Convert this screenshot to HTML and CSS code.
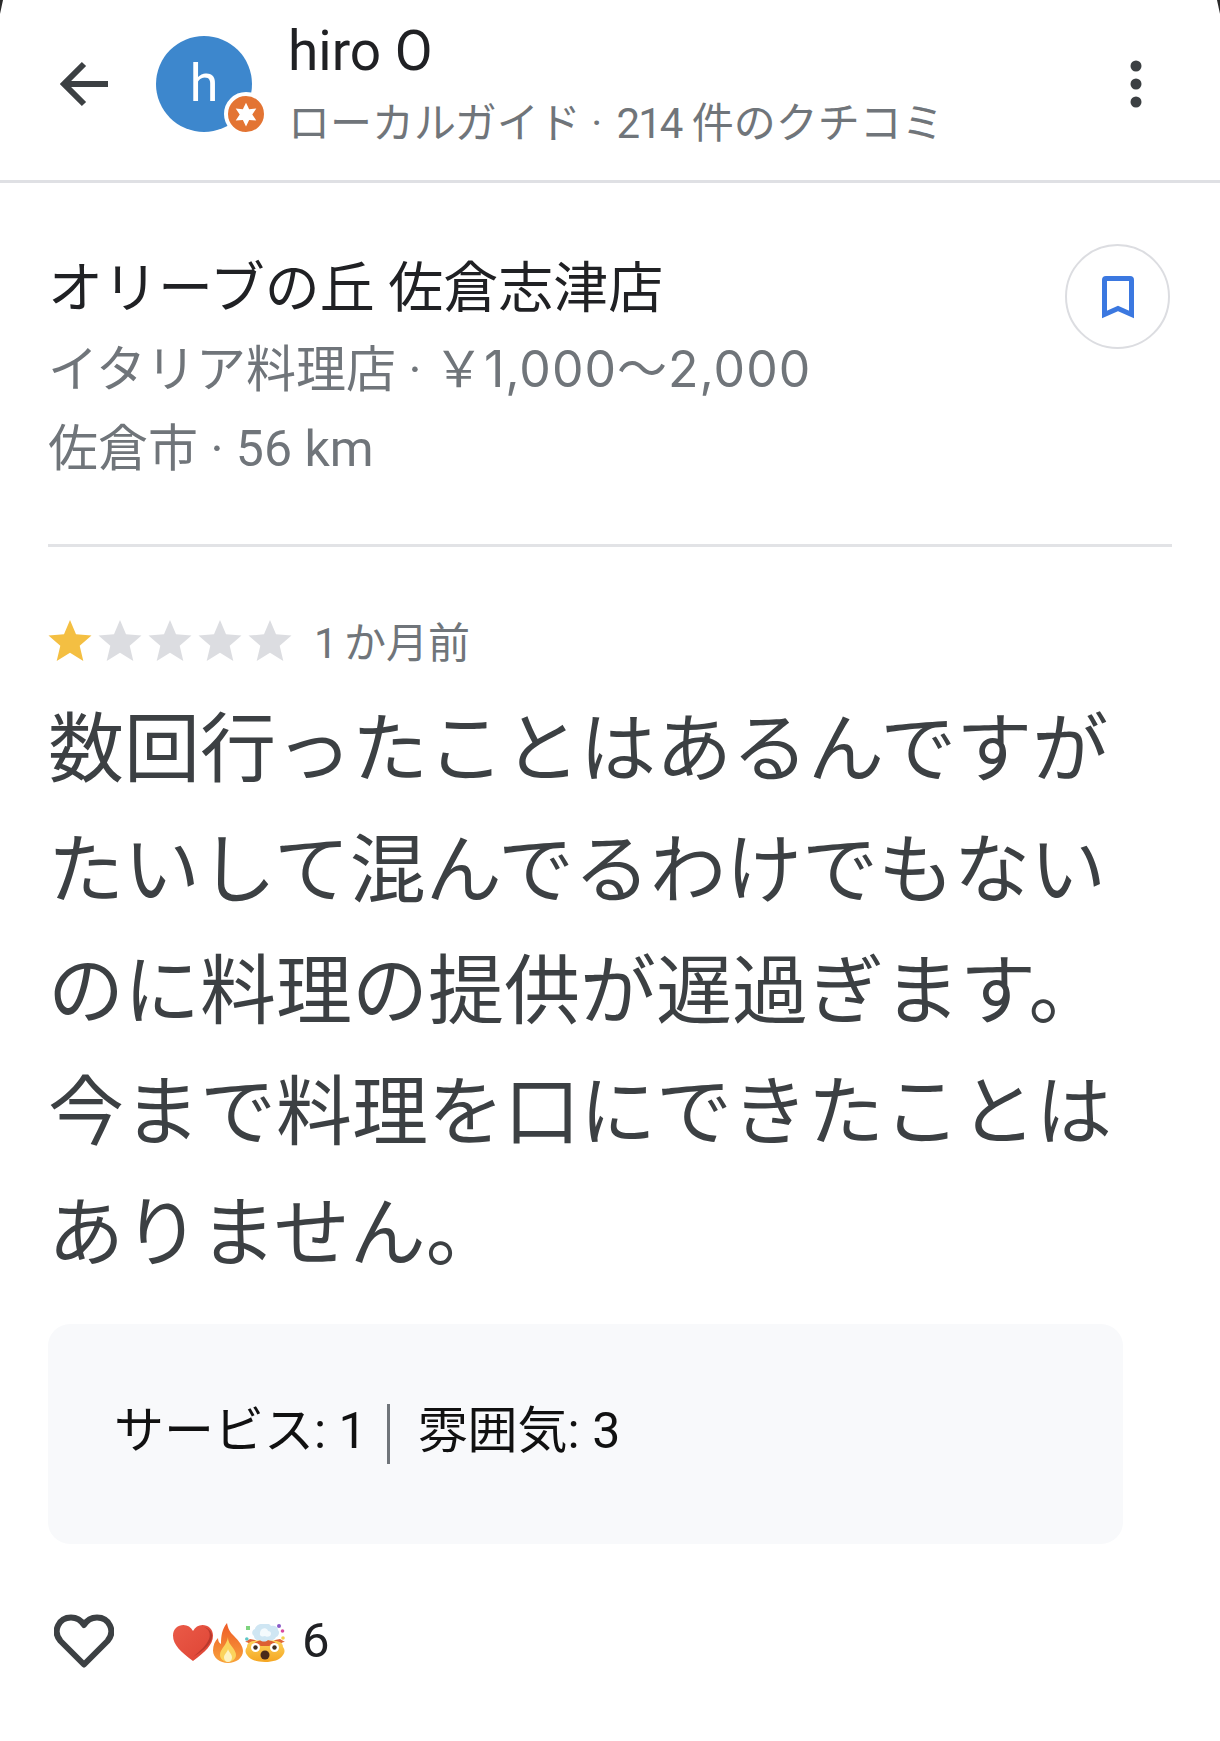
FILE: index.html
```html
<!DOCTYPE html>
<html lang="ja">
<head>
<meta charset="utf-8">
<title>hiro O のクチコミ</title>
<link rel="stylesheet" href="styles.css">
</head>
<body>
<div class="page">
  <span class="corner corner-left"></span>
  <span class="corner corner-right"></span>
  <header class="topbar">
    <svg class="back" viewBox="0 0 52 48"><path d="M50 24H6M26 4 6 24l20 20" fill="none" stroke="#3c4043" stroke-width="6"/></svg>
    <div class="avatar">h
      <span class="badge"><svg viewBox="0 0 24 24"><path d="M12 1.500l2.900 6 6.600-.5-3.700 5.500 3.700 5.500-6.600-.5-2.900 6-2.900-6-6.600.5 3.700-5.500L2.500 7l6.600.5z" fill="#fff"/></svg></span>
    </div>
    <div class="who">
      <div class="name">hiro O</div>
      <div class="sub">ローカルガイド · <span class="sub-count">214</span> 件のクチコミ</div>
    </div>
    <svg class="more" viewBox="0 0 12 48"><circle cx="6" cy="6" r="5.500" fill="#3c4043"/><circle cx="6" cy="24" r="5.500" fill="#3c4043"/><circle cx="6" cy="42" r="5.500" fill="#3c4043"/></svg>
  </header>

  <section class="place">
    <div class="place-info">
      <h1 class="place-name">オリーブの丘 佐倉志津店</h1>
      <div class="place-meta">イタリア料理店 · ￥<span class="price">1,000〜2,000</span></div>
      <div class="place-meta">佐倉市 · 56 km</div>
    </div>
    <div class="save"><svg viewBox="0 0 36 44"><path d="M4.500 39.500V5a1.500 1.500 0 0 1 1.500-1.500h24A1.500 1.500 0 0 1 31.500 5v34.500L18 33.500z" fill="none" stroke="#3b78e0" stroke-width="5"/></svg></div>
  </section>

  <section class="review">
    <div class="rating">
      <div class="stars">
        <svg class="star" viewBox="0 0 44 44"><path class="on" d="M22 1l6 14.300 15.500 1.300-11.800 10.200 3.600 15.200L22 33.800 8.700 42l3.600-15.200L.5 16.600 16 15.300z"/></svg>
        <svg class="star" viewBox="0 0 44 44"><path class="off" d="M22 1l6 14.300 15.500 1.300-11.800 10.200 3.600 15.200L22 33.800 8.700 42l3.600-15.200L.5 16.600 16 15.300z"/></svg>
        <svg class="star" viewBox="0 0 44 44"><path class="off" d="M22 1l6 14.300 15.500 1.300-11.800 10.200 3.600 15.200L22 33.800 8.700 42l3.600-15.200L.5 16.600 16 15.300z"/></svg>
        <svg class="star" viewBox="0 0 44 44"><path class="off" d="M22 1l6 14.300 15.500 1.300-11.800 10.200 3.600 15.200L22 33.800 8.700 42l3.600-15.200L.5 16.600 16 15.300z"/></svg>
        <svg class="star" viewBox="0 0 44 44"><path class="off" d="M22 1l6 14.300 15.500 1.300-11.800 10.200 3.600 15.200L22 33.800 8.700 42l3.600-15.200L.5 16.600 16 15.300z"/></svg>
      </div>
      <span class="when">1 か月前</span>
    </div>
    <p class="body-text">数回行ったことはあるんですが<br>たいして混んでるわけでもない<br>のに料理の提供が遅過ぎます。<br>今まで料理を口にできたことは<br>ありません。</p>
    <div class="scores">
      <span>サービス: 1</span>
      <span class="rule"></span>
      <span>雰囲気: 3</span>
    </div>
  </section>

  <footer class="actions">
    <svg class="like" viewBox="0 0 60 54"><path d="M30 50.500 6.500 27C-2 17 5 3.500 17 3.500c6 0 10 2.500 13 7.500 3-5 7-7.500 13-7.500 12 0 19 13.500 10.500 23.500z" fill="none" stroke="#3c4043" stroke-width="6" stroke-linejoin="round"/></svg>
    <div class="reactions">
      <svg class="emoji emoji-heart" viewBox="0 0 40 36">
        <defs><linearGradient id="heartfill" x1="0" y1="0" x2="1" y2="1"><stop offset="0" stop-color="#ea5a47"/><stop offset="1" stop-color="#de4435"/></linearGradient></defs>
        <path d="M20 36C8 27 0 20 0 10.500 0 4 5 0 10.500 0 14.500 0 18 2 20 6c2-4 5.500-6 9.500-6C35 0 40 4 40 10.500 40 20 32 27 20 36z" fill="url(#heartfill)"/>
        <path d="M31 2c5 2 7 7 5 12-3 7-9 12-16 18 8-5 20-13 19-22-.500-4-4-7-8-8z" fill="#b9392d"/>
      </svg>
      <svg class="emoji emoji-flame" viewBox="0 0 30 40">
        <defs><linearGradient id="flamefill" x1="0" y1="0" x2="0" y2="1"><stop offset="0" stop-color="#ee5a28"/><stop offset="1" stop-color="#f8a13a"/></linearGradient></defs>
        <path d="M14 0c1 6 3 9 7 13 5 5 9 10 9 15 0 7-7 12-15 12S0 35 0 27.500C0 22 2 18 5 15c0 3 1 5 3 6C8 13 9 6 14 0z" fill="url(#flamefill)"/>
        <path d="M15 14c0 5 2 7 5 11 2 3 3 5 3 7 0 4-4 7-8 7s-8-3-8-7c0-6 7-10 8-18z" fill="#fbd35c"/>
        <path d="M15 26c.500 3 4 5 4 8.500 0 2.500-2 4.500-4 4.500s-4-2-4-4.500c0-3.500 3.500-5 4-8.500z" fill="#fdf3c4"/>
      </svg>
      <svg class="emoji emoji-head" viewBox="0 0 40 38">
        <defs><linearGradient id="facefill" x1="0" y1="0" x2="0" y2="1"><stop offset="0" stop-color="#fdd35a"/><stop offset="1" stop-color="#f5a623"/></linearGradient></defs>
        <path d="M6 22c-2-4-5-4-6-4l5-3 5 1 6 4zM34 22c2-4 5-4 6-4l-5-3-5 1-6 4z" fill="#e0673a"/>
        <path d="M2 23C2 18 7 16 20 16s18 2 18 7c2 3 2 5 0 8-3 5-10 7-18 7S5 36 2 31c-2-3-2-5 0-8z" fill="url(#facefill)"/>
        <path d="M8 20c4-3 6-4 12-4s8 1 12 4c-4-.5-6 1-8 2h-8c-2-1-4-2.500-8-2z" fill="#dd5f32"/>
        <path d="M19 0c3-1 6 0 7 2 4-1 7 1 7 4 2 2 1 6-2 7-1 3-5 4-8 3-2 2-6 2-8 0-3 1-6-1-6-4-3-2-2-6 1-7 0-3 5-6 9-5z" fill="#cfe6f3"/>
        <path d="M17 5c3-2 6 0 6 2 3 0 4 3 2 5-2 1-4 1-5 0-3 1-6 0-5-3 0-2 1-3 2-4z" fill="#f4fafd"/>
        <rect x="1" y="2" width="4" height="4" fill="#7ed47e"/><circle cx="34" cy="2" r="2" fill="#8a5ac8"/><circle cx="37.500" cy="7" r="1.800" fill="#d84aa0"/><circle cx="1.800" cy="15" r="1.800" fill="#5cc6c6"/><circle cx="38" cy="14" r="1.800" fill="#f4cf4a"/>
        <circle cx="10.500" cy="23.500" r="4.500" fill="#fff"/><circle cx="29.500" cy="23.500" r="4.500" fill="#fff"/><circle cx="10.500" cy="23.500" r="2.200" fill="#3f2d20"/><circle cx="29.500" cy="23.500" r="2.200" fill="#3f2d20"/>
        <ellipse cx="20" cy="31" rx="4.500" ry="4.500" fill="#4a2a1a"/>
      </svg>
    </div>
    <span class="count">6</span>
  </footer>
</div>
</body>
</html>
```

FILE: styles.css
```css
* { box-sizing: border-box; }
html, body { margin: 0; padding: 0; background: #fff; }
body { font-family: Roboto, "Noto Sans CJK JP", sans-serif; }
.page { width: 1220px; height: 1741px; position: relative; overflow: hidden; background: #fff; }
.corner { position: absolute; top: 0; width: 3px; height: 14px; background: #2a2a2a; }
.corner-left { left: 0; clip-path: polygon(0 0, 100% 0, 0 100%); }
.corner-right { right: 0; clip-path: polygon(0 0, 100% 0, 100% 100%); }

.topbar { height: 183px; display: flex; align-items: center; padding: 0 0 13px 58px; border-bottom: 3px solid #dfe0e4; }
.back { width: 52px; height: 48px; flex: none; }
.avatar { position: relative; width: 96px; height: 96px; margin-left: 46px; flex: none; border-radius: 50%; background: #3d87cd; color: #fff; font-size: 52px; line-height: 96px; text-align: center; }
.badge { position: absolute; right: -16px; bottom: -4px; width: 44px; height: 44px; padding: 5px; border-radius: 50%; background: #e37433; border: 4px solid #fff; display: flex; }
.badge svg { width: 100%; height: 100%; }
.who { margin-left: 36px; flex: 1; margin-top: 9px; }
.name { font-size: 55px; line-height: 58px; color: #202124; }
.sub { font-size: 42px; line-height: 60px; color: #70757a; margin-top: 14px; }
.sub-count { margin-left: 4px; letter-spacing: -2px; }
.more { width: 12px; height: 48px; flex: none; margin-right: 78px; }

.place { display: flex; justify-content: space-between; margin: 0 48px; padding: 61px 0 0; height: 364px; border-bottom: 3px solid #e2e3e6; }
.place-name { margin: 3px 0 0; font-size: 55px; font-weight: 400; line-height: 83px; color: #202124; }
.place-meta { font-size: 50px; line-height: 79px; color: #70757a; }
.price { font-family: Inter, "Noto Sans CJK JP", sans-serif; letter-spacing: 1px; }
.save { width: 105px; height: 105px; border: 2px solid #dcdde1; border-radius: 50%; display: flex; align-items: center; justify-content: center; margin-right: 2px; flex: none; }
.save svg { width: 36px; height: 44px; }

.review { padding: 69px 48px 0; }
.rating { display: flex; align-items: center; height: 50px; }
.stars { display: flex; gap: 6px; }
.star { width: 44px; height: 44px; display: block; }
.on { fill: #f4bf42; }
.off { fill: #dcdde1; }
.when { margin: -4px 0 0 22px; font-size: 42px; color: #70757a; word-spacing: -4px; }
.body-text { margin: 24px 0 0; font-size: 76px; line-height: 121px; color: #3c4043; white-space: nowrap; }
.scores { width: 1075px; height: 220px; margin-top: 29px; padding: 0 0 16px 66px; border-radius: 22px; background: #f8f9fb; display: flex; align-items: center; font-size: 50px; color: #111; }
.rule { width: 3px; height: 60px; margin: 16px 28px 0 20px; background: #70757a; }

.actions { display: flex; align-items: center; padding: 70px 0 0 54px; }
.like { width: 60px; height: 54px; flex: none; }
.reactions { display: flex; align-items: center; margin: 4px 0 0 59px; }
.emoji { display: block; flex: none; }
.emoji-heart { width: 40px; height: 36px; }
.emoji-flame { width: 30px; height: 40px; }
.emoji-head { width: 40px; height: 38px; margin-left: 2px; }
.count { font-size: 49px; line-height: 54px; color: #202124; margin-left: 17px; }
```
